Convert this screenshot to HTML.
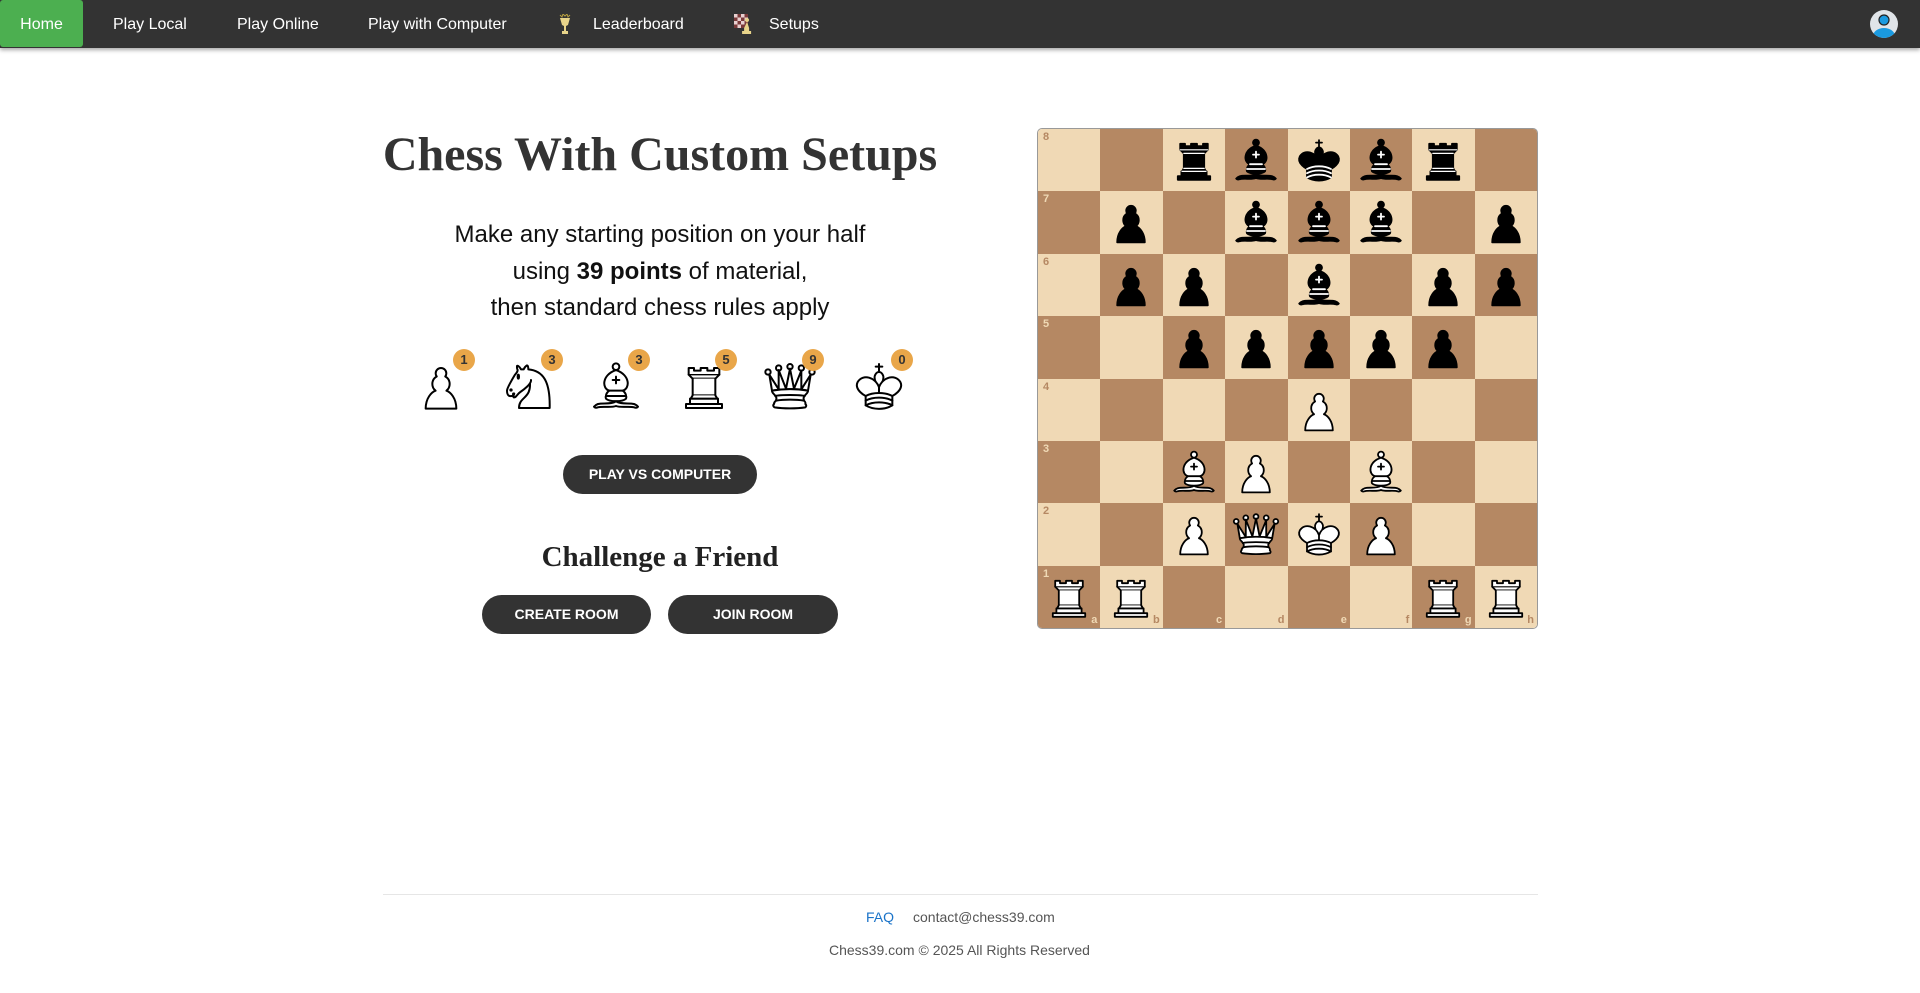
<!DOCTYPE html>
<html><head><meta charset="utf-8"><style>
*{margin:0;padding:0;box-sizing:border-box}
body{width:1920px;height:993px;background:#fff;font-family:"Liberation Sans",Arial,sans-serif;position:relative;overflow:hidden}
.nav{position:absolute;left:0;top:0;width:1920px;height:48px;background:#333;box-shadow:0 2px 4px rgba(0,0,0,.35)}
.nav a{position:absolute;top:0;height:48px;line-height:50px;color:#fff;font-size:16px;text-decoration:none}
.home{left:0;width:83px;background:#4caf50;border-radius:3px;text-align:center;height:47px!important}
.abs{position:absolute}
h1{position:absolute;left:340px;width:640px;top:127px;text-align:center;font-family:"Liberation Serif",serif;font-weight:bold;font-size:48px;color:#333}
.p{position:absolute;left:340px;width:640px;top:217px;text-align:center;font-size:24px;line-height:36.5px;color:#111}
.pc{position:absolute;top:356px;width:60px;height:60px}
.bd{position:absolute;width:22px;height:22px;border-radius:50%;background:#e9a649;color:#333;font-weight:bold;font-size:13px;line-height:22px;text-align:center;top:349px}
.btn{position:absolute;height:39px;border-radius:20px;background:#333;color:#fff;font-weight:bold;font-size:14px;line-height:39px;text-align:center}
h2{position:absolute;left:340px;width:640px;top:541px;text-align:center;font-family:"Liberation Serif",serif;font-weight:bold;font-size:29px;color:#222}
.board{position:absolute;left:1037px;top:128px;width:501px;height:501px;border:1px solid #999;border-radius:5px;overflow:hidden;display:grid;grid-template-columns:repeat(8,1fr);grid-template-rows:repeat(8,1fr)}
.sq{position:relative}
.sq svg{position:absolute;left:4px;top:4px;width:54px;height:54px}
.l{background:#f0d9b5}.d{background:#b58863}
.rk{position:absolute;left:5px;top:2px;font-size:11px;line-height:12px;font-weight:bold}
.fl{position:absolute;right:3px;bottom:2px;font-size:11px;line-height:12px;font-weight:bold}
.l .rk,.l .fl{color:#b58863}.d .rk,.d .fl{color:#f0d9b5}
</style></head><body>
<div class="nav">
<a class="home">Home</a>
<a style="left:113px">Play Local</a>
<a style="left:237px">Play Online</a>
<a style="left:368px">Play with Computer</a>
<svg class="abs" style="left:559px;top:14px" width="12" height="22" viewBox="0 0 12 22"><path d="M1 4h10l-2 7-2 1v5h2v3H3v-3h2v-5l-2-1z" fill="#e8d48a"/><path d="M1 1l2 2 1-3 2 2 2-2 1 3 2-2" stroke="#b8a040" fill="none"/></svg>
<a style="left:593px">Leaderboard</a>
<svg class="abs" style="left:734px;top:14px" width="18" height="20" viewBox="0 0 18 20"><rect width="14" height="14" fill="#7a3a3a"/><g fill="#e8d0d0"><rect x="0" y="0" width="3.5" height="3.5"/><rect x="7" y="0" width="3.5" height="3.5"/><rect x="3.5" y="3.5" width="3.5" height="3.5"/><rect x="10.5" y="3.5" width="3.5" height="3.5"/><rect x="0" y="7" width="3.5" height="3.5"/><rect x="7" y="7" width="3.5" height="3.5"/><rect x="3.5" y="10.5" width="3.5" height="3.5"/></g><path d="M13 8a2 2 0 1 1 0.1 0l2 6v3h2v3h-9v-3h2v-3z" fill="#e8d48a"/></svg>
<a style="left:769px">Setups</a>
<svg class="abs" style="left:1869px;top:9px" width="30" height="30" viewBox="0 0 30 30"><circle cx="15" cy="15" r="14" fill="#e0e4e8"/><clipPath id="c"><circle cx="15" cy="15" r="14"/></clipPath><g clip-path="url(#c)" fill="#1a9ae0"><circle cx="15" cy="11" r="5"/><ellipse cx="15" cy="27" rx="11" ry="8"/></g><circle cx="15" cy="11" r="5" fill="none" stroke="#222" stroke-width="1.2"/></svg>
</div>
<h1>Chess With Custom Setups</h1>
<div class="p">Make any starting position on your half<br>using <b>39 points</b> of material,<br>then standard chess rules apply</div>
<div class="pc" id="i0" style="left:411px"></div><div class="bd" style="left:453px">1</div>
<div class="pc" id="i1" style="left:499px"></div><div class="bd" style="left:541px">3</div>
<div class="pc" id="i2" style="left:586px"></div><div class="bd" style="left:628px">3</div>
<div class="pc" id="i3" style="left:674px"></div><div class="bd" style="left:715px">5</div>
<div class="pc" id="i4" style="left:760px"></div><div class="bd" style="left:802px">9</div>
<div class="pc" id="i5" style="left:849px"></div><div class="bd" style="left:891px">0</div>
<div class="btn" style="left:563px;top:455px;width:194px">PLAY VS COMPUTER</div>
<h2>Challenge a Friend</h2>
<div class="btn" style="left:482px;top:595px;width:169px">CREATE ROOM</div>
<div class="btn" style="left:668px;top:595px;width:170px">JOIN ROOM</div>
<div class="board" id="b"></div>
<div class="abs" style="left:383px;top:894px;width:1155px;height:1px;background:#e6e6e6"></div>
<div class="abs" style="left:866px;top:909px;font-size:14px;color:#1a73c8">FAQ</div>
<div class="abs" style="left:913px;top:909px;font-size:14px;color:#555">contact@chess39.com</div>
<div class="abs" style="left:829px;top:942px;font-size:14px;color:#555">Chess39.com © 2025 All Rights Reserved</div>
<script>
function svg(t,w){
var f=w?"#fff":"#000",s="#000",d=w?"#000":"#fff",o='<svg viewBox="0 0 45 45"><g fill="'+f+'" stroke="'+s+'" stroke-width="1.5" stroke-linecap="round" stroke-linejoin="round">';
if(t=="p")o+='<path d="M22.5 9c-2.21 0-4 1.79-4 4 0 .89.29 1.71.78 2.38C17.33 16.5 16 18.59 16 21c0 2.03.94 3.84 2.410 5.03C15.41 27.09 11 31.58 11 39.5h23c0-7.920-4.41-12.41-7.41-13.47C28.06 24.84 29 23.03 29 21c0-2.41-1.33-4.5-3.28-5.62.49-.67.78-1.49.78-2.38 0-2.21-1.79-4-4-4z"/>';
if(t=="r")o+='<path d="M9 39h27v-3H9v3zM12 36v-4h21v4H12zM11 14V9h4v2h5V9h5v2h5V9h4v5"/><path d="M34 14l-3 3H14l-3-3"/><path d="M31 17v12.5H14V17"/><path d="M31 29.5l1.5 2.5h-20l1.5-2.5"/><path d="M11 14h23" fill="none" stroke="'+(w?"#000":"#fff")+'" stroke-width="1"/>'+(w?'':'<path d="M12.5 32h20M14 29.5h17M14 17h17" fill="none" stroke="#fff" stroke-width="1"/>');
if(t=="b")o+='<path d="M9 36c3.39-.97 10.11.43 13.5-2 3.39 2.43 10.11 1.03 13.5 2 0 0 1.65.54 3 2-.68.97-1.65.99-3 .5-3.39-.97-10.11.46-13.5-1-3.39 1.46-10.11.03-13.5 1-1.35.49-2.32.47-3-.5 1.35-1.46 3-2 3-2z"/><path d="M15 32c2.5 2.5 12.5 2.5 15 0 .5-1.5 0-2 0-2 0-2.5-2.5-4-2.5-4 5.5-1.5 6-11.5-5-15.5-11 4-10.5 14-5 15.5 0 0-2.5 1.5-2.5 4 0 0-.5.5 0 2z"/><path d="M25 8a2.5 2.5 0 1 1-5 0 2.5 2.5 0 1 1 5 0z"/><path d="M17.5 26h10M15 30h15m-7.5-14.5v5M20 18h5" fill="none" stroke="'+d+'"/>';
if(t=="k")o+='<path d="M22.5 11.63V6M20 8h5" fill="none" stroke="#000"/><path d="M22.5 25s4.5-7.5 3-10.5c0 0-1-2.5-3-2.5s-3 2.5-3 2.5c-1.5 3 3 10.5 3 10.5"/><path d="M12.5 37c5.5 3.5 14.5 3.5 20 0v-7s9-4.5 6-10.5c-4-6.5-13.5-3.5-16 4V27v-3.5c-2.5-7.5-12-10.5-16-4-3 6 6 10.5 6 10.5v7"/><path d="M12.5 30c5.5-3 14.5-3 20 0m-20 3.5c5.5-3 14.5-3 20 0m-20 3.5c5.5-3 14.5-3 20 0" fill="none" stroke="'+d+'"/>';
if(t=="q")o+='<circle cx="6" cy="12" r="2"/><circle cx="14" cy="9" r="2"/><circle cx="22.5" cy="8" r="2"/><circle cx="31" cy="9" r="2"/><circle cx="39" cy="12" r="2"/><path d="M9 26c8.5-1.5 21-1.5 27 0l2-12-7 11V11l-5.5 13.5-3-15-3 15-5.5-14V25L7 14l2 12z"/><path d="M9 26c0 2 1.5 2 2.5 4 1 1.5 1 1 .5 3.5-1.5 1-1.5 2.5-1.5 2.5-1.5 1.5.5 2.5.5 2.5 6.5 1 16.5 1 23 0 0 0 1.5-1 0-2.5 0 0 .5-1.5-1-2.5-.5-2.5-.5-2 .5-3.5 1-2 2.5-2 2.5-4-8.5-1.5-18.5-1.5-27 0z"/><path d="M11.5 30c3.5-1 18.5-1 22 0M12 33.5c6-1 15-1 21 0" fill="none" stroke="'+d+'"/>';
if(t=="n")o+='<path d="M22 10c10.5 1 16.5 8 16 29H15c0-9 10-6.5 8-21"/><path d="M24 18c.38 2.91-5.55 7.37-8 9-3 2-2.82 4.34-5 4-1.042-.94 1.41-3.04 0-3-1 0 .19 1.23-1 2-1 0-4.003 1-4-4 0-2 6-12 6-12s1.89-1.9 2-3.5c-.73-.994-.5-2-.5-3 1-1 3 2.5 3 2.5h2s.78-1.992 2.5-3c1 0 1 3 1 3"/><path d="M9.5 25.5a.5.5 0 1 1-1 0 .5.5 0 1 1 1 0zM15 15.5a.5 1.5 0 1 1-1 0 .5 1.5 0 1 1 1 0z" fill="#000"/>';
return o+'</g></svg>';}
var ic="pnbrqk";for(var i=0;i<6;i++)document.getElementById("i"+i).innerHTML=svg(ic[i],true).replace('<svg ','<svg width="60" height="60" ');
var pos=["..rbkbr.",".p.bbb.p",".pp.b.pp","..ppppp.","....P...","..BP.B..","..PQKP..","RR....RR"];
var h="";
for(var r=0;r<8;r++)for(var c=0;c<8;c++){var ch=pos[r][c];var cls=((r+c)%2?"d":"l");
h+='<div class="sq '+cls+'">';
if(c==0)h+='<span class="rk">'+(8-r)+'</span>';
if(r==7)h+='<span class="fl">'+"abcdefgh"[c]+'</span>';
if(ch!=".")h+=svg(ch.toLowerCase(),ch!=ch.toLowerCase());
h+='</div>';}
document.getElementById("b").innerHTML=h;
</script>
</body></html>
